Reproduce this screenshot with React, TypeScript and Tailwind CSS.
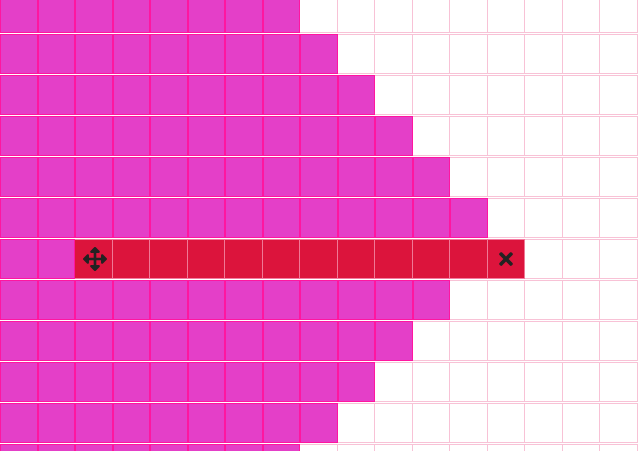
import { FaArrowsAlt, FaTimes } from 'react-icons/fa'

const COLS = 17

// number of magenta cells per row, top to bottom
const rows: { filled: number; bar?: [number, number] }[] = [
  { filled: 8 },
  { filled: 9 },
  { filled: 10 },
  { filled: 11 },
  { filled: 12 },
  { filled: 13 },
  { filled: 2, bar: [2, 13] },
  { filled: 12 },
  { filled: 11 },
  { filled: 10 },
  { filled: 9 },
  { filled: 8 },
]

function Cell({ kind, icon }: { kind: 'empty' | 'filled' | 'bar'; icon?: 'move' | 'close' }) {
  if (kind === 'filled') {
    return <div className="h-full bg-[#e43fc8] border border-[#ff16a0]" />
  }
  if (kind === 'bar') {
    return (
      <div className="h-full bg-[#dc143c] border-y border-r border-y-[#f47aa0] border-r-[#f07896] flex items-center justify-center text-[#222]">
        {icon === 'move' && <FaArrowsAlt className="w-[24px] h-[24px] ml-[3px]" />}
        {icon === 'close' && <FaTimes className="w-[20px] h-[20px]" />}
      </div>
    )
  }
  return <div className="h-full border-y border-r border-[#f8c2d6]" />
}

export default function App() {
  return (
    <div className="w-[638px] h-[451px] overflow-hidden bg-white">
      <div className="-mt-[7px] flex flex-col gap-px">
        {rows.map((row, r) => (
          <div key={r} className="grid grid-cols-17 h-[40px]">
            {Array.from({ length: COLS }).map((_, c) => {
              if (row.bar && c >= row.bar[0] && c <= row.bar[1]) {
                const icon = c === row.bar[0] ? 'move' : c === row.bar[1] ? 'close' : undefined
                return <Cell key={c} kind="bar" icon={icon} />
              }
              return <Cell key={c} kind={c < row.filled ? 'filled' : 'empty'} />
            })}
          </div>
        ))}
      </div>
    </div>
  )
}
